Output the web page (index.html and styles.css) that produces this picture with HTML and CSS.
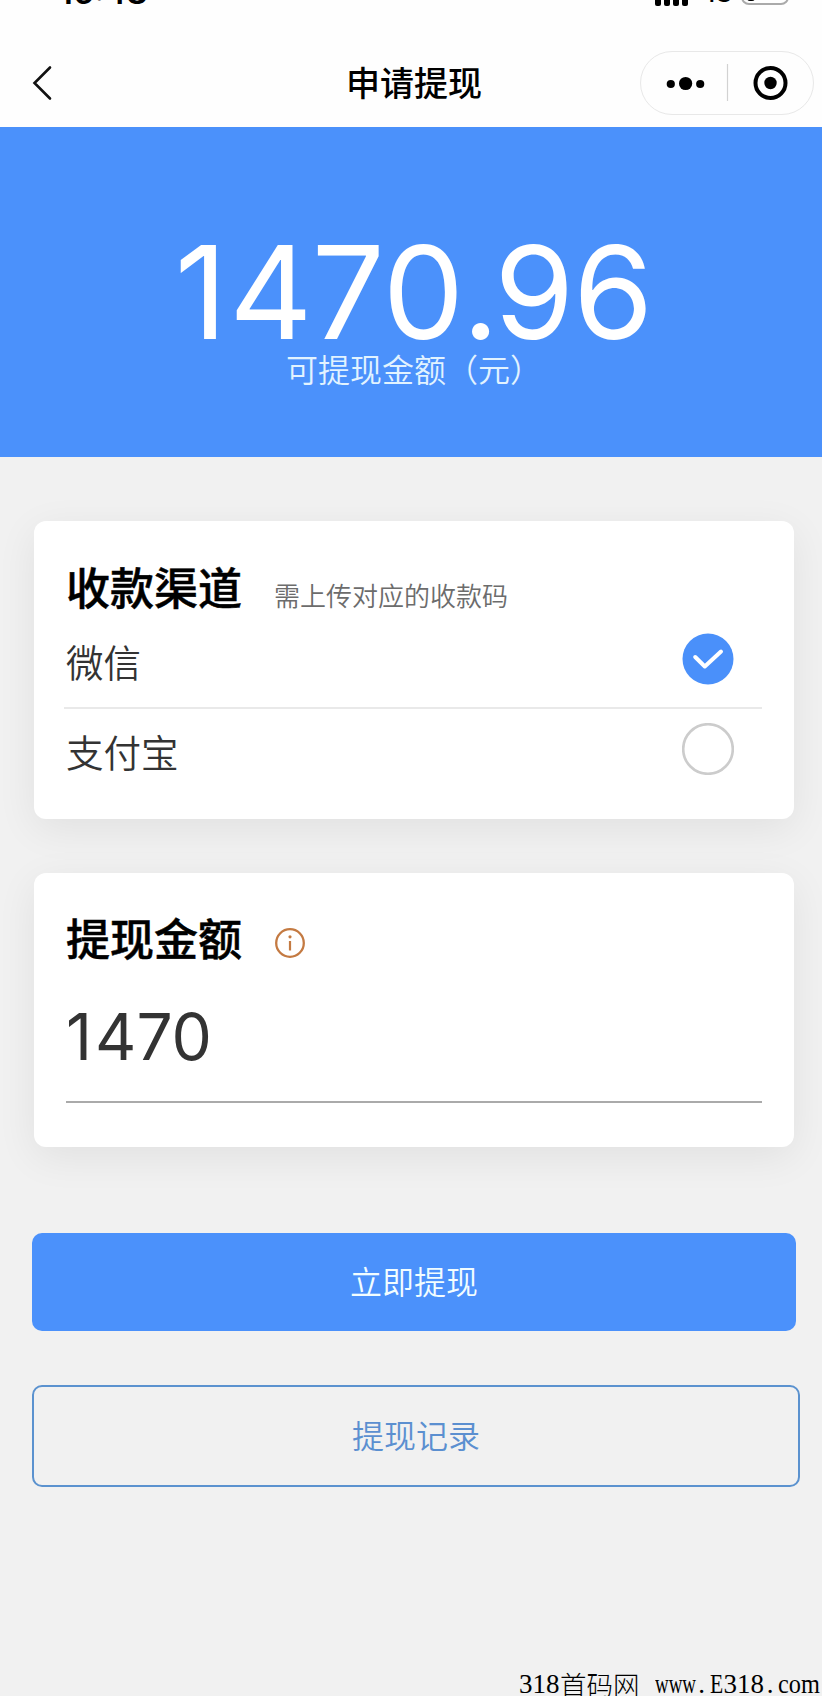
FILE: index.html
```
<!DOCTYPE html>
<html lang="zh-CN">
<head>
<meta charset="utf-8">
<title>申请提现</title>
<link rel="stylesheet" href="styles.css">
</head>
<body>
<div class="app">
  <header class="top">
    <div class="status">
      <span class="time">16:48</span>
      <div class="status-right">
        <div class="bars"><i></i><i></i><i></i><i></i></div>
        <span class="net">4G</span>
        <div class="battery"><i></i></div>
      </div>
    </div>
    <div class="nav">
      <svg class="back" width="20" height="36" viewBox="0 0 20 36"><path d="M18 2.5 2.5 18 18 33.5" fill="none" stroke="#111" stroke-width="2.6" stroke-linecap="round"/></svg>
      <h1 class="title">申请提现</h1>
      <div class="capsule">
        <svg width="172" height="62" viewBox="0 0 172 62"><circle cx="29.8" cy="32" r="4.1"/><circle cx="44.6" cy="31.5" r="6.6"/><circle cx="59.2" cy="32" r="4.1"/><path d="M86.5 12v37" stroke="#d2d2d2" stroke-width="1.2"/><circle cx="129.5" cy="31" r="15" fill="none" stroke="#000" stroke-width="4"/><circle cx="129.5" cy="31" r="6.2"/></svg>
      </div>
    </div>
  </header>
  <section class="hero">
    <div class="balance"><span class="k1">1</span><span class="k4">4</span><span class="k7">7</span><span class="k0">0</span><span class="kd">.</span><span class="k9">9</span>6</div>
    <div class="caption">可提现金额（元）</div>
  </section>
  <main class="content">
    <section class="card channels">
      <div class="card-head"><h2>收款渠道</h2><span class="hint">需上传对应的收款码</span></div>
      <div class="row first"><span>微信</span>
        <svg width="52" height="52" viewBox="0 0 52 52"><circle cx="26" cy="26" r="25.5" fill="#4a90fa"/><path d="M13.2 24 22.8 33.5 39 18.5" fill="none" stroke="#fff" stroke-width="4" stroke-linecap="round" stroke-linejoin="round"/></svg>
      </div>
      <div class="row"><span>支付宝</span>
        <svg width="52" height="52" viewBox="0 0 52 52"><circle cx="26" cy="26" r="24.8" fill="#fff" stroke="#ccc" stroke-width="2.6"/></svg>
      </div>
    </section>
    <section class="card amount">
      <div class="card-head"><h2>提现金额</h2>
        <svg class="info" width="32" height="32" viewBox="0 0 32 32"><circle cx="16" cy="16" r="13.8" fill="none" stroke="#c47a42" stroke-width="2.3"/><circle cx="16" cy="9.8" r="1.6" fill="#c47a42"/><path d="M16 14v9.5" stroke="#c47a42" stroke-width="2.2"/></svg>
      </div>
      <div class="field"><span class="f1">1</span>470</div>
    </section>
    <button class="btn primary">立即提现</button>
    <button class="btn outline">提现记录</button>
  </main>
  <footer class="mark"><span class="n3">318</span><span class="cjk">首码网</span><span class="n3 w">www</span><span class="n1">.</span><span class="n1 e">E</span><span class="n3">318</span><span class="n1">.</span><span class="n3 c">com</span></footer>
</div>
</body>
</html>
```
FILE: styles.css
```
* { box-sizing: border-box; }
html, body { margin: 0; overflow: hidden; }
body { background: #f1f1f1; font-family: Inter, "Noto Sans CJK SC", sans-serif; color: #000; }
h1, h2 { margin: 0; }
svg { display: block; flex: none; }
.app { width: 828px; height: 1696px; display: flex; flex-direction: column; position: relative; overflow: hidden; }

.top { height: 127px; background: #fefefe; flex: none; }
.status { height: 39px; display: flex; justify-content: space-between; padding: 0 39px 0 59px; }
.time { font-size: 33px; font-weight: 600; line-height: 40px; margin-top: -28px; }
.status-right { display: flex; align-items: flex-start; }
.bars { display: flex; gap: 3px; }
.bars i { width: 6px; height: 6px; background: #000; border-radius: 0 0 2px 2px; }
.net { font-size: 26px; line-height: 30px; margin: -22px 17px 0 12px; width: 24px; letter-spacing: -3px; font-weight: 500; }
.battery { width: 48px; height: 25px; margin-top: -20px; border: 2px solid #aaa; border-radius: 8px; padding: 2px 4px; }
.battery i { display: block; width: 8px; height: 17px; background: #000; border-radius: 3px; }
.nav { height: 88px; padding: 12px 14px 0 32px; display: flex; justify-content: space-between; }
.back { margin-top: 14px; }
.title { font-size: 34px; font-weight: 500; line-height: 50px; margin: 8px 0 0 136px; }
.capsule { width: 174px; height: 64px; border: 1px solid #e8e8e8; border-radius: 32px; }

.hero { height: 330px; background: #4b91fb; color: #fff; text-align: center; flex: none; padding-top: 109px; }
.balance { font-size: 129px; line-height: 112px; font-kerning: none; }
.k1 { letter-spacing: 2px; }
.k4 { letter-spacing: -1px; }
.k7 { letter-spacing: -2px; }
.k0 { letter-spacing: -2px; }
.kd { letter-spacing: -5px; }
.k9 { letter-spacing: -1px; }
.caption { font-size: 32px; line-height: 46px; color: #e2f3ff; font-weight: 350; }

.content { padding: 64px 28px 0 32px; display: flex; flex-direction: column; }
.card { margin: 0 6px 0 2px; background: #fff; border-radius: 12px; box-shadow: 0 10px 40px rgba(0,0,0,.07); padding: 36px 32px 0; }
.card-head { display: flex; align-items: baseline; height: 62px; }
h2 { font-size: 44px; line-height: 64px; font-weight: 500; -webkit-text-stroke: .5px #000; }
.channels { height: 298px; }
.hint { font-size: 26px; margin-left: 32px; color: #6c6c6c; font-weight: 350; position: relative; top: 1px; }
.row { height: 90px; display: flex; justify-content: space-between; padding: 14px 28px 0 2px; font-size: 37.5px; line-height: 62px; color: #333; font-weight: 350; margin-left: -2px; }
.row.first { border-bottom: 2px solid #e9e9e9; }
.amount { margin-top: 54px; height: 274px; }
.amount h2 { margin-top: -1px; }
.info { align-self: flex-start; margin: 18px 0 0 32px; }
.field { font-size: 64px; line-height: 78px; height: 132px; padding-top: 27px; color: #333; border-bottom: 2px solid #aaa; }
.f1 { letter-spacing: 3px; }
.btn { font: inherit; font-size: 32px; font-weight: 350; border-radius: 10px; margin: 0; padding: 0 0 5px; }
.primary { margin-top: 86px; width: 764px; height: 98px; border: 0; background: #4b91fb; color: #f2fdff; }
.outline { margin-top: 54px; width: 768px; height: 102px; border: 2px solid #5b92cf; background: transparent; color: #5b8fd0; }

/* Site mark: half-width cells of 13.7px, full-width cells of 27.4px */
.mark { position: absolute; left: 519px; bottom: -5px; display: flex; font-family: "Liberation Serif", serif; font-size: 27px; line-height: 34px; white-space: pre; }
.mark span { flex: none; transform-origin: 0 50%; }
.n3 { width: 41.1px; }
.n1 { width: 13.7px; padding-left: 2px; }
.mark .cjk { font-family: "Noto Sans CJK SC", sans-serif; font-weight: 300; width: 95px; font-size: 26.5px; }
.w { transform: scaleX(.7); }
.e { transform: scaleX(.8); padding-left: 0; }
.c { transform: scaleX(.9); }
```
